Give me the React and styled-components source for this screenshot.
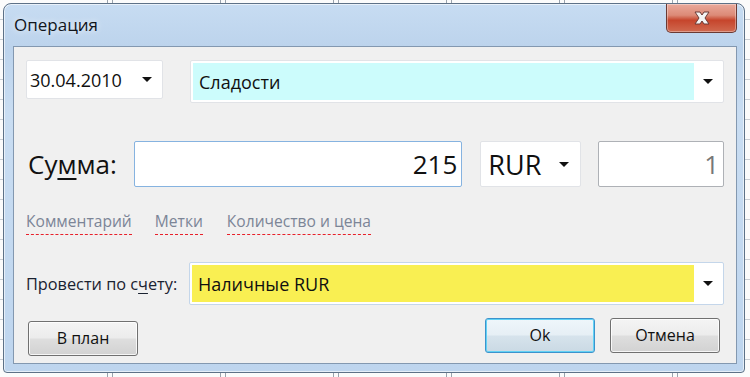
import React from "react";
import styled, { createGlobalStyle } from "styled-components";

const GlobalStyle = createGlobalStyle`
  html, body {
    margin: 0;
    padding: 0;
    background: #ffffff;
  }
  body {
    font-family: "Open Sans", "Noto Sans", sans-serif;
    color: #000;
  }
`;

const Desktop = styled.div`
  width: 750px;
  height: 377px;
  box-sizing: border-box;
  padding: 3px 5px 4px 3px;
  overflow: hidden;
  background-color: #fbfbfb;
  background-image: repeating-linear-gradient(
      90deg,
      transparent 0 107px,
      #9aa3ad 107px 108px,
      transparent 108px 112px,
      #9aa3ad 112px 113px
    ),
    repeating-linear-gradient(180deg, transparent 0 19px, #c9ced4 19px 20px);
`;

const Window = styled.div`
  height: 100%;
  box-sizing: border-box;
  display: flex;
  flex-direction: column;
  border: 1px solid #5d7187;
  border-radius: 8px 8px 4px 4px;
  background: linear-gradient(
    180deg,
    #c7dcf2 0%,
    #bcd3ec 12%,
    #c9ddf2 30%,
    #bed5ee 100%
  );
  box-shadow: inset 0 0 0 1px rgba(255, 255, 255, 0.6);
`;

const TitleBar = styled.div`
  height: 42px;
  display: flex;
  justify-content: space-between;
  align-items: flex-start;
  padding: 0 7px 0 10px;
`;

const Title = styled.div`
  margin-top: 9px;
  font-size: 17px;
  color: #10151c;
  text-shadow: 0 0 6px rgba(255, 255, 255, 0.9);
`;

const CloseButton = styled.div`
  width: 71px;
  height: 29px;
  box-sizing: border-box;
  display: flex;
  align-items: center;
  justify-content: center;
  border: 1px solid #6b3a33;
  border-top: none;
  border-radius: 0 0 5px 5px;
  background: linear-gradient(
    180deg,
    #eaa99b 0%,
    #dc8a77 40%,
    #c6452c 58%,
    #d06a50 100%
  );
  box-shadow: inset 0 0 0 1px rgba(255, 255, 255, 0.35);
`;

const Client = styled.div`
  flex: 1;
  margin: 0 7px 8px 9px;
  box-sizing: border-box;
  border: 1px solid #8398b0;
  background: #f0f0f0;
  padding: 13px 12px 0 12px;
  display: flex;
  flex-direction: column;
`;

const Row = styled.div`
  display: flex;
  align-items: ${(p) => p.$align || "flex-start"};
  margin-top: ${(p) => p.$top || 0}px;
`;

const Combo = styled.div`
  width: ${(p) => p.$w}px;
  height: ${(p) => p.$h}px;
  margin-left: ${(p) => p.$ml || 0}px;
  box-sizing: border-box;
  display: flex;
  align-items: stretch;
  background: #fff;
  border: 1px solid ${(p) => p.$border || "#e1e3e7"};
  border-radius: 2px;
  padding: 2px;
`;

const ComboField = styled.div`
  flex: 1;
  display: flex;
  align-items: center;
  padding-left: ${(p) => p.$pl || 2}px;
  background: ${(p) => p.$bg || "transparent"};
  font-size: ${(p) => p.$size || 18}px;
  color: #101010;
`;

const ArrowBox = styled.div`
  width: 27px;
  display: flex;
  align-items: center;
  justify-content: center;
`;

const Arrow = styled.div`
  width: 0;
  height: 0;
  border-left: 5px solid transparent;
  border-right: 5px solid transparent;
  border-top: 5px solid #111;
`;

const BigLabel = styled.div`
  width: 107px;
  margin-left: 2px;
  font-size: 26px;
  color: #111;
`;

const Input = styled.div`
  width: ${(p) => p.$w}px;
  height: 46px;
  margin-left: ${(p) => p.$ml || 0}px;
  box-sizing: border-box;
  display: flex;
  align-items: center;
  justify-content: flex-end;
  padding-right: 4px;
  background: #fff;
  border: 1px solid ${(p) => p.$border};
  border-radius: 2px;
  font-size: 26px;
  color: ${(p) => p.$color || "#111"};
`;

const Link = styled.span`
  margin-right: ${(p) => p.$mr}px;
  padding-bottom: 3px;
  font-size: 15.6px;
  line-height: 20px;
  color: #7c8597;
  border-bottom: 1px dashed #e8202a;
`;

const Label = styled.div`
  width: 163px;
  font-size: 16.3px;
  color: #1a2230;
`;

const Key = styled.span`
  text-decoration: underline;
  text-underline-offset: ${(p) => p.$off || 3}px;
`;

const Footer = styled.div`
  display: flex;
  justify-content: space-between;
  align-items: flex-start;
  margin-top: 16px;
  padding-left: 2px;
`;

const ButtonGroup = styled.div`
  display: flex;
  gap: 15px;
  margin-top: -3px;
  margin-right: 4px;
`;

const Button = styled.button`
  width: 110px;
  height: 35px;
  box-sizing: border-box;
  font-family: inherit;
  font-size: 16px;
  color: #111;
  border-radius: 3px;
  border: 1px solid ${(p) => (p.$default ? "#3c93cc" : "#707070")};
  background: linear-gradient(
    180deg,
    ${(p) => (p.$default ? "#eef6fb" : "#f4f4f4")} 0%,
    ${(p) => (p.$default ? "#e6eff5" : "#ececec")} 48%,
    ${(p) => (p.$default ? "#d6e3ec" : "#dedede")} 52%,
    ${(p) => (p.$default ? "#cad9e4" : "#d2d2d2")} 100%
  );
  box-shadow: inset 0 0 0 1px
    ${(p) => (p.$default ? "#62d2f5" : "rgba(255, 255, 255, 0.8)")};
  padding: 0 0 2px;
`;

const Close = () => (
  <svg width="20" height="14" viewBox="0 0 20 14">
    <path
      d="M3 1 L8 1 L10 4 L12 1 L17 1 L13 7 L17 13 L12 13 L10 10 L8 13 L3 13 L7 7 Z"
      fill="#f4f4f4"
      stroke="#6a3b36"
      strokeWidth="1"
      strokeLinejoin="round"
    />
  </svg>
);

export default function App() {
  return (
    <>
      <GlobalStyle />
      <Desktop>
        <Window>
          <TitleBar>
            <Title>Операция</Title>
            <CloseButton>
              <Close />
            </CloseButton>
          </TitleBar>
          <Client>
            <Row>
              <Combo $w={137} $h={39}>
                <ComboField $pl={1}>30.04.2010</ComboField>
                <ArrowBox>
                  <Arrow />
                </ArrowBox>
              </Combo>
              <Combo $w={534} $h={43} $ml={27}>
                <ComboField $bg="#ccfcfc" $pl={6}>
                  Сладости
                </ComboField>
                <ArrowBox>
                  <Arrow />
                </ArrowBox>
              </Combo>
            </Row>
            <Row $top={38} $align="center">
              <BigLabel>
                Су<Key $off={4}>м</Key>ма:
              </BigLabel>
              <Input $w={330} $border="#86b3e0">
                215
              </Input>
              <Combo $w={101} $h={46} $ml={18}>
                <ComboField $size={27} $pl={5}>
                  RUR
                </ComboField>
                <ArrowBox>
                  <Arrow />
                </ArrowBox>
              </Combo>
              <Input $w={127} $ml={17} $border="#aeb1b6" $color="#777">
                1
              </Input>
            </Row>
            <Row $top={24}>
              <Link $mr={23}>Комментарий</Link>
              <Link $mr={24}>Метки</Link>
              <Link $mr={0}>Количество и цена</Link>
            </Row>
            <Row $top={27} $align="center">
              <Label>
                Провести по с<Key>ч</Key>ету:
              </Label>
              <Combo $w={535} $h={43} $border="#c4d6ea">
                <ComboField $bg="#f9ef52" $pl={6}>
                  Наличные RUR
                </ComboField>
                <ArrowBox>
                  <Arrow />
                </ArrowBox>
              </Combo>
            </Row>
            <Footer>
              <Button>В план</Button>
              <ButtonGroup>
                <Button $default>Ok</Button>
                <Button>Отмена</Button>
              </ButtonGroup>
            </Footer>
          </Client>
        </Window>
      </Desktop>
    </>
  );
}
